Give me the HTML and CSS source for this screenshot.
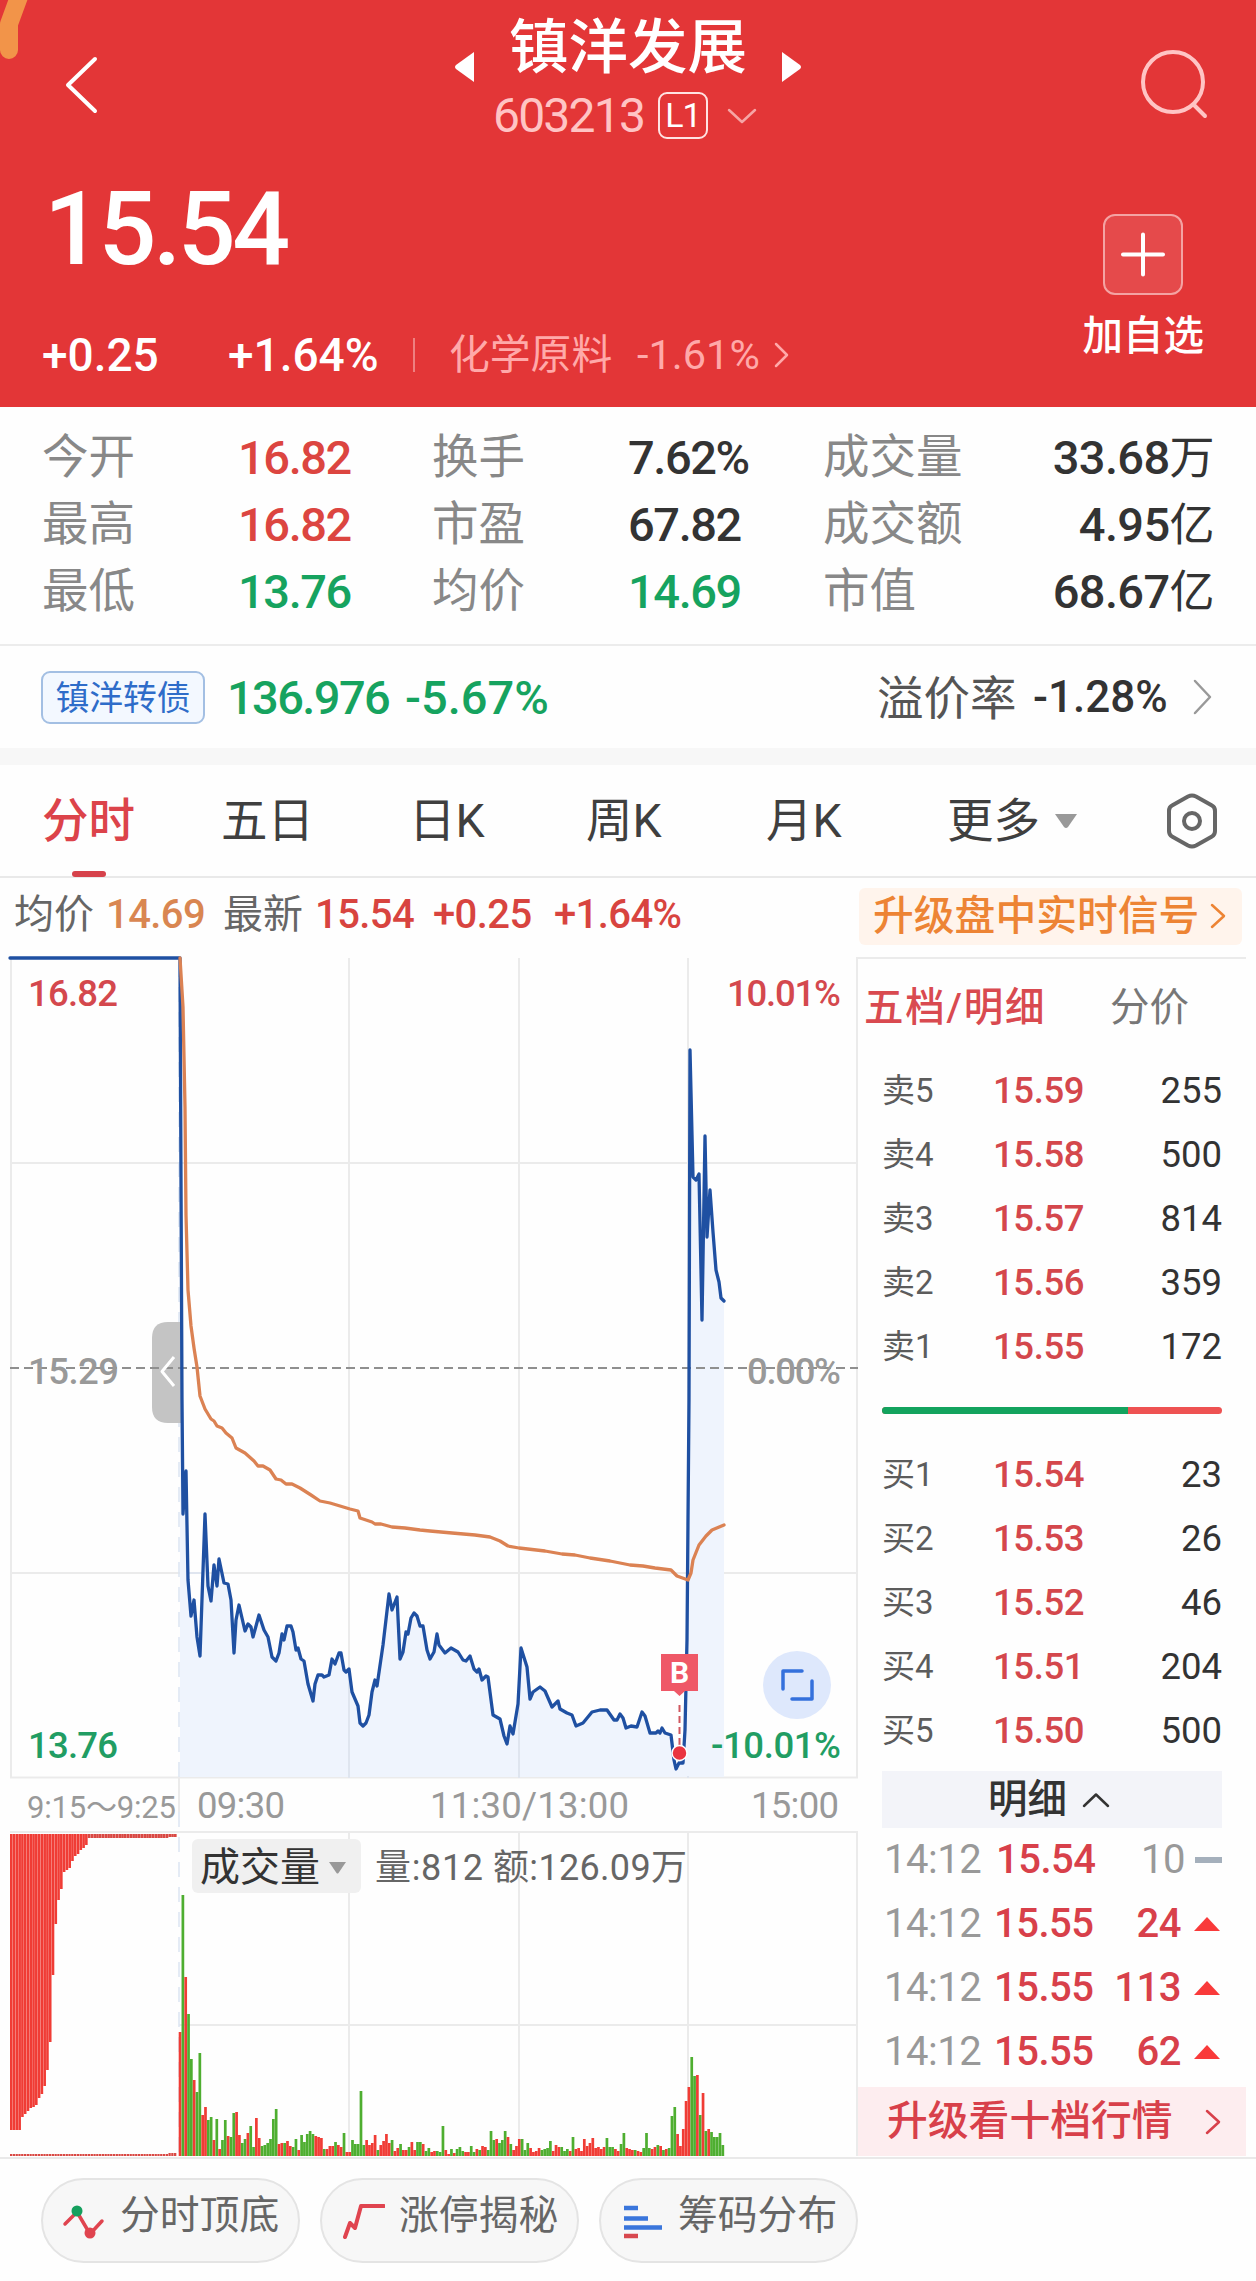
FILE: index.html
```
<!DOCTYPE html>
<html lang="zh-CN">
<head>
    <meta charset="UTF-8">
    <title>镇洋发展 603213</title>
    <link rel="stylesheet" href="styles.css">
</head>
<body>
    <div class="header">
        <svg class="corner" width="40" height="64"><path d="M20 -6L9 24V50"/></svg>
        <div class="topbar">
            <svg class="back" width="36" height="60"><path d="M31 4L4 30L31 56"/></svg>
            <div class="title-block">
                <div class="title-row">
                    <svg class="tri" width="20" height="30"><path d="M20 0V30L2 17Q0 15 2 13Z"/></svg>
                    <h1>镇洋发展</h1>
                    <svg class="tri" width="20" height="30"><path d="M0 0V30L18 17Q20 15 18 13Z"/></svg>
                </div>
                <div class="code-row">
                    <span class="code">603213</span>
                    <span class="level">L1</span>
                    <svg class="down" width="30" height="16"><path d="M2 2L15 14L28 2"/></svg>
                </div>
            </div>
            <svg class="search" width="72" height="72"><circle cx="35" cy="34" r="30"/><path d="M56 57L67 68"/></svg>
        </div>
        <div class="quote">
            <div>
                <div class="price">15.54</div>
                <div class="change">
                    <span class="diff">+0.25</span>
                    <span class="rate">+1.64%</span>
                    <i class="bar"></i>
                    <span class="sector">化学原料</span>
                    <span class="sector-rate">-1.61%</span>
                    <svg width="16" height="26"><path d="M2 2L13 13L2 24"/></svg>
                </div>
            </div>
            <div class="watch">
                <svg width="80" height="81"><rect x="1" y="1" width="78" height="79" rx="11"/><path d="M20 40.500H60M40 20.500V60.500"/></svg>
                <span>加自选</span>
            </div>
        </div>
    </div>

    <div class="stats">
        <span>今开</span><b class="red">16.82</b><span>换手</span><b>7.62%</b><span>成交量</span><b class="last">33.68<em>万</em></b>
        <span>最高</span><b class="red">16.82</b><span>市盈</span><b>67.82</b><span>成交额</span><b class="last">4.95<em>亿</em></b>
        <span>最低</span><b class="green">13.76</b><span>均价</span><b class="green">14.69</b><span>市值</span><b class="last">68.67<em>亿</em></b>
    </div>

    <div class="bond">
        <span class="tag">镇洋转债</span>
        <span class="bond-price">136.976</span>
        <span class="bond-rate">-5.67%</span>
        <span class="premium">溢价率</span>
        <span class="premium-rate">-1.28%</span>
        <svg width="22" height="36"><path d="M3 2L18 18L3 34"/></svg>
    </div>

    <div class="tabs">
        <span class="active">分时</span>
        <span>五日</span>
        <span>日K</span>
        <span>周K</span>
        <span>月K</span>
        <span>更多</span>
        <svg class="more" width="24" height="16"><path d="M1 1H23L14 14Q12 16 10 14Z"/></svg>
        <svg class="hex" width="52" height="56"><path d="M22 3.500Q26 1.500 30 3.500L46 12.500Q49 14 49 18V38Q49 42 46 43.500L30 52.500Q26 54.500 22 52.500L6 43.500Q3 42 3 38V18Q3 14 6 12.500Z"/><circle cx="26" cy="28" r="8"/></svg>
    </div>

    <div class="info">
        <span class="i-label">均价</span>
        <span class="i-avg">14.69</span>
        <span class="i-label2">最新</span>
        <span class="i-red">15.54</span>
        <span class="i-red i-diff">+0.25</span>
        <span class="i-red">+1.64%</span>
        <div class="signal">升级盘中实时信号<svg width="16" height="28"><path d="M2 3L14 14L2 25"/></svg></div>
    </div>

    <div class="main">
        <svg class="chart" width="858" height="1202" viewBox="0 957 858 1202">
            <!-- grid -->
            <path class="grid" d="M11 957V1778M349 958V1778M519 958V1778M688 958V1778M857 957V1778M10 1163H857M10 1573H857M10 1777.500H858M179 1778V1812"/>
            <path class="grid" d="M10 1832H858M179 2025H857M349 1832V2156M519 1832V2156M688 1832V2156M857 1832V2156"/>
            <path class="area" id="area"/>
            <path class="grid over" d="M349 1672V1778M519 1650V1778M688 1776V1778M189 1573H204M206 1573H209"/>
            <path class="split" d="M179 962V1778M179 1812V2156"/>
            <path class="handle" d="M181 1322H168Q152 1322 152 1338V1407Q152 1423 168 1423H181Z"/>
            <path class="zero" d="M10 1368H858"/>
            <path class="handle-arrow" d="M174 1357L162 1371.500L174 1386"/>
            <path class="line price-line" id="priceLine"/>
            <path class="line avg-line" id="avgLine"/>

            <g class="t36">
                <text class="c-red" x="28" y="1006" textLength="90">16.82</text>
                <text class="c-gray" x="28" y="1384" textLength="91">15.29</text>
                <text class="c-green" x="28" y="1758" textLength="90">13.76</text>
                <text class="c-red" x="727" y="1006" textLength="114">10.01%</text>
                <text class="c-gray" x="747" y="1384" textLength="94">0.00%</text>
                <text class="c-green" x="711" y="1758" textLength="130">-10.01%</text>
            </g>
            <g class="t36 c-gray">
                <text class="small" x="27" y="1818" textLength="149">9:15～9:25</text>
                <text x="197" y="1818" textLength="88">09:30</text>
                <text x="430" y="1818" textLength="199">11:30/13:00</text>
                <text x="751" y="1818" textLength="88">15:00</text>
            </g>

            <!-- buy marker -->
            <path class="mark-line" d="M679.500 1705V1746"/>
            <path class="mark" d="M661 1654H698V1691H685L679.500 1696L674 1691H661Z"/>
            <text class="mark-text" x="679.500" y="1683">B</text>
            <circle class="dot" cx="679.500" cy="1753" r="7.500"/>
            <!-- full screen button -->
            <circle class="full" cx="797" cy="1685" r="34"/>
            <path class="full-icon" d="M783 1689V1671H802M812 1681V1699H792"/>

            <!-- volume -->
            <g id="auction"></g>
            <g id="volume"></g>
            <rect class="vol-btn" x="192" y="1839" width="169" height="54" rx="6"/>
            <text class="vol-name" x="200" y="1881">成交量</text>
            <path class="vol-tri" d="M329 1862H346L338.500 1873Q337.500 1874 336.500 1873Z"/>
            <text class="vol-text" x="375" y="1880" textLength="108">量:812</text>
            <text class="vol-text" x="493" y="1880" textLength="194">额:126.09万</text>
        </svg>

        <div class="side">
            <div class="side-tabs"><span class="on">五档/明细</span><span>分价</span></div>
            <div class="book">
                <div><span>卖5</span><b>15.59</b><i>255</i></div>
                <div><span>卖4</span><b>15.58</b><i>500</i></div>
                <div><span>卖3</span><b>15.57</b><i>814</i></div>
                <div><span>卖2</span><b>15.56</b><i>359</i></div>
                <div><span>卖1</span><b>15.55</b><i>172</i></div>
            </div>
            <div class="ratio"><i></i></div>
            <div class="book">
                <div><span>买1</span><b>15.54</b><i>23</i></div>
                <div><span>买2</span><b>15.53</b><i>26</i></div>
                <div><span>买3</span><b>15.52</b><i>46</i></div>
                <div><span>买4</span><b>15.51</b><i>204</i></div>
                <div><span>买5</span><b>15.50</b><i>500</i></div>
            </div>
            <div class="detail">明细<svg width="28" height="16"><path d="M2 14L14 2.500L26 14"/></svg></div>
            <div class="trades">
                <div><span>14:12</span><b class="flat-price">15.54</b><i class="flat">10</i><svg width="28" height="14"><path class="dash" d="M1 4H28V10H1Z"/></svg></div>
                <div><span>14:12</span><b>15.55</b><i>24</i><svg width="28" height="14"><path d="M0 14L13 0L26 14Z"/></svg></div>
                <div><span>14:12</span><b>15.55</b><i>113</i><svg width="28" height="14"><path d="M0 14L13 0L26 14Z"/></svg></div>
                <div><span>14:12</span><b>15.55</b><i>62</i><svg width="28" height="14"><path d="M0 14L13 0L26 14Z"/></svg></div>
            </div>
            <div class="upgrade">升级看十档行情<svg width="18" height="28"><path d="M2 3L14 14L2 25"/></svg></div>
        </div>
    </div>

    <div class="pills">
        <div>
            <svg width="44" height="40"><path class="r" d="M3 24L15 12L28 34L40 21"/><circle class="gd" cx="15" cy="11" r="5.500"/><circle class="rd" cx="28" cy="33" r="5.500"/></svg>
            <span>分时顶底</span>
        </div>
        <div>
            <svg width="44" height="40"><path class="r thick" d="M4 37L9 23L14 28L20 6H43"/></svg>
            <span>涨停揭秘</span>
        </div>
        <div>
            <svg width="44" height="40"><path class="bl" d="M4 8H18M4 18.500H28M4 27.500H42"/><path class="rl" d="M4 36H18"/></svg>
            <span>筹码分布</span>
        </div>
    </div>
    <script src="script.js"></script>
</body>
</html>
```

FILE: styles.css
```
body {
    margin: 0;
    width: 1256px;
    height: 2281px;
    overflow: hidden;
    background-color: #fefefe;
    color: #333;
    font-family: Roboto, "Noto Sans CJK SC", sans-serif;
}
svg {
    display: block;
    flex: none;
    fill: none;
    stroke-linecap: round;
    stroke-linejoin: round;
}
b, i, em {
    font-style: normal;
    font-weight: 400;
}
.red { color: #dc4540; }
.green { color: #16a35f; }

/* header */
.header {
    position: relative;
    height: 407px;
    background-color: #e33637;
    color: #fff;
}
.corner {
    position: absolute;
    left: 0;
    top: 0;
    stroke: #f29449;
    stroke-width: 18;
}
.topbar {
    display: flex;
    justify-content: space-between;
    height: 150px;
    padding: 0 46px 0 64px;
}
.back {
    margin-top: 55px;
    stroke: #fff;
    stroke-width: 4;
}
.title-block {
    width: 400px;
    margin-left: 18px;
}
.title-row {
    display: flex;
    justify-content: center;
    height: 92px;
}
.title-row h1 {
    margin: 0 35px 0 35px;
    font-size: 59.5px;
    line-height: 96px;
    font-weight: 500;
}
.tri {
    margin-top: 52px;
    fill: #fff;
}
.code-row {
    display: flex;
    align-items: center;
    height: 47px;
    padding-left: 65px;
}
.code {
    width: 165px;
    font-size: 48px;
    letter-spacing: -1.8px;
    color: #ffc4c4;
}
.level {
    box-sizing: border-box;
    width: 50px;
    height: 47px;
    border: 2.5px solid #ffe3e3;
    border-radius: 9px;
    font-size: 34px;
    line-height: 43px;
    text-align: center;
    letter-spacing: -1px;
}
.down {
    margin-left: 19px;
    stroke: #f6a5a5;
    stroke-width: 2.5;
}
.search {
    margin-top: 48px;
    stroke: #ffc4c4;
    stroke-width: 4;
}
.quote {
    display: flex;
    justify-content: space-between;
    padding: 0 52px 0 42px;
}
.price {
    height: 156px;
    padding-left: 2px;
    font-size: 102px;
    line-height: 159px;
    font-weight: 500;
    letter-spacing: -3.5px;
}
.change {
    display: flex;
    align-items: center;
    height: 98px;
    font-size: 46px;
    line-height: 98px;
    white-space: nowrap;
}
.diff, .rate { font-weight: 500; }
.diff { width: 186px; }
.rate { width: 185px; }
.change .bar {
    width: 2px;
    height: 34px;
    background-color: #ee8080;
}
.change .sector {
    width: 188px;
    margin-left: 34px;
    font-size: 40.8px;
    color: #ffa9a9;
}
.change .sector-rate {
    width: 137px;
    font-size: 41.5px;
    color: #ffa9a9;
}
.change svg {
    stroke: #ffa9a9;
    stroke-width: 2.5;
}
.watch {
    display: flex;
    flex-direction: column;
    align-items: center;
    padding-top: 64px;
    font-size: 40.5px;
    line-height: 52px;
    font-weight: 500;
}
.watch svg {
    margin-bottom: 15px;
    stroke: #fff;
    stroke-width: 4;
}
.watch rect {
    fill: rgba(255, 255, 255, .1);
    stroke: #f4a3a3;
    stroke-width: 2;
}

/* stats */
.stats {
    display: grid;
    grid-template-columns: 196px 194px 196px 195px 179px 212px;
    grid-auto-rows: 67px;
    height: 220px;
    padding: 17px 42px 0;
    border-bottom: 2px solid #ececec;
    line-height: 67px;
    font-size: 46.5px;
    white-space: nowrap;
}
.stats span { color: #888; }
.stats b {
    font-size: 47px;
    font-weight: 500;
    letter-spacing: -1.4px;
}
.stats .last {
    text-align: right;
    letter-spacing: -.6px;
}
.stats em { font-size: 45px; }

.bond {
    display: flex;
    align-items: center;
    height: 102px;
    padding: 0 42px 0 41px;
    font-size: 47px;
    border-bottom: 17px solid #f7f7f7;
}
.tag {
    box-sizing: border-box;
    width: 164px;
    height: 53px;
    border: 2px solid #a3bfe3;
    border-radius: 9px;
    background-color: #f3f8ff;
    color: #2e6cc9;
    font-size: 33.8px;
    line-height: 52px;
    text-align: center;
}
.bond-price {
    width: 178px;
    margin-left: 22px;
    color: #16a35f;
    font-weight: 500;
    letter-spacing: -1.6px;
}
.bond-rate {
    color: #16a35f;
    font-weight: 500;
}
.premium {
    margin: -5px 0 0 auto;
    width: 156px;
    color: #555;
    font-size: 46.5px;
}
.premium-rate {
    width: 159px;
    font-size: 44px;
    font-weight: 500;
}
.bond svg {
    stroke: #999;
    stroke-width: 2.5;
}

/* period tabs */
.tabs {
    display: flex;
    align-items: center;
    height: 111px;
    padding-left: 42px;
    border-bottom: 2px solid #e9e9e9;
    color: #3f3f3f;
    font-size: 46.5px;
    line-height: 112px;
}
.tabs span {
    position: relative;
    width: 179px;
    white-space: nowrap;
}
.tabs span:nth-child(2) { width: 188px; }
.tabs span:nth-child(3) { width: 177px; }
.tabs span:nth-child(4) { width: 180px; }
.tabs span:nth-child(5) { width: 181px; }
.tabs span:nth-child(6) { width: 107px; }
.tabs .active {
    color: #dc434a;
    font-weight: 500;
}
.tabs .active::after {
    content: "";
    position: absolute;
    left: 30px;
    bottom: 0;
    width: 34px;
    height: 6px;
    border-radius: 3px;
    background-color: #d6424b;
}
.more { fill: #999; }
.hex {
    margin-left: 88px;
    stroke: #666;
    stroke-width: 4;
}
.info {
    display: flex;
    align-items: center;
    height: 79px;
    padding-left: 14px;
    font-size: 40px;
    line-height: 73px;
    white-space: nowrap;
}
.info span {
    height: 79px;
    letter-spacing: -.6px;
}
.info .i-label { width: 92px; color: #666; font-size: 40px; letter-spacing: 0; }
.i-avg { width: 117px; color: #d98651; font-weight: 500; }
.info .i-label2 { width: 92px; color: #666; font-size: 40px; letter-spacing: 0; }
.i-red { width: 118px; color: #d8443f; font-weight: 500; }
.i-diff { width: 121px; }
.info .signal {
    box-sizing: border-box;
    display: flex;
    align-items: center;
    width: 383px;
    height: 57px;
    margin: -3px 14px 0 auto;
    padding-left: 14px;
    border-radius: 6px;
    background-color: #fff4ec;
    color: #ed8434;
    font-size: 40.8px;
    line-height: 57px;
    font-weight: 500;
}
.signal svg {
    margin-left: 11px;
    stroke: #ed8434;
    stroke-width: 2.5;
}

/* chart */
.main {
    display: flex;
    height: 1200px;
    border-bottom: 2px solid #e9e9e9;
}
.chart {
    overflow: visible;
    stroke-linecap: butt;
}
.grid { stroke: #ebebeb; stroke-width: 2; }
.over { stroke: #dfe5ef; }
.area { fill: #eff4fd; }
.split { stroke: #dbe5f2; stroke-width: 1.5; stroke-dasharray: 15 10; }
.zero { stroke: #8f8f8f; stroke-width: 2; stroke-dasharray: 9 5; }
.handle { fill: #c4c4c4; }
.handle-arrow { stroke: #fff; stroke-width: 3; }
.line { stroke-width: 3.3; stroke-linecap: round; }
.price-line { stroke: #1f50a2; }
.avg-line { stroke: #db8253; }
.t36 { font-size: 36.5px; font-weight: 500; }
.t36.c-gray { font-weight: 400; }
.t36 .small { font-size: 31px; }
.c-red { fill: #d4484d; }
.c-gray { fill: #999; }
.c-green { fill: #219d63; }
.mark-line { stroke: #d0575f; stroke-width: 2; stroke-dasharray: 7 4; }
.mark { fill: #ef5867; }
.mark-text {
    fill: #fff;
    font-size: 30px;
    font-weight: 700;
    text-anchor: middle;
}
.dot { fill: #ea3440; stroke: #fff; stroke-width: 1.5; }
.full { fill: #dee8fc; }
.full-icon { stroke: #3470dc; stroke-width: 3.5; stroke-linecap: round; }
.up { fill: #f03c35; }
.fall { fill: #4eae30; }
.line-dots { fill: #d94843; }
.vol-btn { fill: #f0f0f0; }
.vol-name { fill: #333; font-size: 40px; }
.vol-tri { fill: #999; }
.vol-text { fill: #666; font-size: 36px; }

/* order book */
.side {
    width: 388px;
    border-top: 2px solid #ebebeb;
}
.side-tabs {
    display: flex;
    height: 99px;
    padding-left: 6px;
    color: #777;
    font-size: 39.5px;
    line-height: 98px;
}
.side-tabs .on {
    width: 246px;
    color: #d94a50;
    font-weight: 500;
    letter-spacing: 1.8px;
}
.book div {
    display: flex;
    height: 64px;
    padding: 0 24px 0 24px;
    line-height: 65px;
    font-size: 36.5px;
}
.book span {
    width: 111px;
    color: #5c5c5c;
    font-size: 33px;
}
.book b {
    color: #d4474c;
    font-weight: 500;
    letter-spacing: -.4px;
}
.book i { margin-left: auto; }
.ratio {
    width: 340px;
    height: 7px;
    margin: 29px 0 28px 24px;
    border-radius: 4px;
    background-color: #ee5252;
}
.ratio i {
    display: block;
    width: 246px;
    height: 7px;
    border-radius: 4px 0 0 4px;
    background-color: #13a35e;
}
.detail {
    box-sizing: border-box;
    display: flex;
    align-items: center;
    width: 340px;
    height: 57px;
    margin: 9px 0 0 24px;
    padding-left: 106px;
    background-color: #f3f4f9;
    font-size: 39.5px;
    line-height: 57px;
    font-weight: 500;
}
.detail svg {
    margin-left: 15px;
    stroke: #333;
    stroke-width: 2.5;
}
.trades {
    height: 259px;
}
.trades div {
    display: flex;
    align-items: center;
    height: 64px;
    padding: 0 24px 0 26px;
    font-size: 40px;
    line-height: 68px;
}
.trades span {
    width: 110px;
    color: #999;
    letter-spacing: -.5px;
}
.trades b, .trades i {
    color: #d8404a;
    font-weight: 500;
    letter-spacing: -.5px;
}
.trades .flat-price { margin-left: 2px; }
.trades i { margin-left: auto; }
.trades .flat {
    color: #999;
    font-weight: 400;
}
.trades svg {
    margin-left: 13px;
    fill: #f93a3a;
}
.trades .flat + svg { margin-left: 9px; }
.trades .dash { fill: #a5b0bc; }
.upgrade {
    display: flex;
    align-items: center;
    height: 69px;
    padding-left: 29px;
    background-color: #fdedef;
    color: #d8404a;
    font-size: 40.8px;
    line-height: 71px;
    font-weight: 500;
}
.upgrade svg {
    margin-left: 32px;
    stroke: #d8404a;
    stroke-width: 2.5;
}

/* bottom pills */
.pills {
    display: flex;
    gap: 20px;
    padding: 19px 0 0 41px;
}
.pills div {
    box-sizing: border-box;
    display: flex;
    align-items: center;
    width: 259px;
    height: 85px;
    padding-left: 19px;
    border: 2px solid #e4e4e4;
    border-radius: 43px;
    background-color: #f7f7f7;
    color: #666;
    font-size: 39.8px;
}
.pills span {
    margin: -19px 0 0 14px;
    white-space: nowrap;
}
.pills svg { margin-top: -2px; }
.pills .r { stroke: #e0444f; stroke-width: 3.5; }
.pills .thick { stroke-width: 4; }
.gd { fill: #15a05e; }
.rd { fill: #e0444f; }
.bl { stroke: #3a76dc; stroke-width: 4.5; stroke-linecap: butt; }
.rl { stroke: #d8484f; stroke-width: 4.5; stroke-linecap: butt; }
```

FILE: script.js
```
// x,y points of the price line after the opening auction
var price = "180,958 182,1400 183,1514 186,1471 188,1580 191,1616 194,1600 197,1637 200,1656 205,1514 208,1586 211,1601 214,1565 217,1586 219,1559 224,1583 228,1584 231,1600 234,1653 236,1620 239,1605 245,1631 248,1624 251,1627 253,1637 259,1615 264,1630 268,1637 272,1657 276,1661 279,1653 282,1634 284,1640 287,1626 291,1626 293,1632 296,1650 298,1648 301,1659 304,1661 308,1684 313,1701 315,1684 318,1675 322,1675 324,1677 329,1675 332,1659 335,1664 339,1653 341,1653 344,1670 346,1672 349,1669 352,1692 358,1706 360,1723 363,1726 366,1723 369,1715 372,1692 375,1680 377,1686 383,1645 389,1594 392,1610 397,1597 400,1659 403,1652 406,1632 408,1634 411,1618 414,1613 417,1616 420,1626 423,1626 427,1650 430,1659 434,1652 437,1634 439,1645 445,1653 451,1648 458,1652 463,1660 466,1661 470,1656 474,1669 477,1672 479,1669 482,1680 486,1676 488,1677 493,1715 500,1719 504,1736 507,1744 510,1726 513,1734 518,1704 521,1648 527,1667 530,1699 533,1692 540,1687 545,1691 552,1707 558,1701 560,1709 567,1713 572,1715 576,1726 583,1723 592,1712 600,1710 607,1710 614,1720 617,1720 620,1714 623,1718 626,1728 631,1726 637,1727 642,1712 645,1716 650,1733 656,1733 658,1731 660,1733 662,1728 665,1733 671,1735 674,1760 676,1769 679,1763 683,1763 685,1730 687,1640 689,1400 690,1050 693,1177 696,1180 699,1174 702,1320 705,1136 707,1237 710,1190 713,1232 716,1270 719,1282 721,1298 724,1301";
var avg = "180,958 183,1007 185,1107 186,1215 188,1290 191,1326 194,1348 197,1367 200,1396 205,1409 211,1419 214,1421 217,1426 222,1428 226,1433 232,1438 236,1448 245,1453 254,1461 258,1466 263,1466 270,1470 276,1479 281,1480 286,1484 292,1484 300,1488 311,1495 320,1501 330,1503 340,1506 350,1509 358,1511 360,1518 372,1522 375,1524 381,1524 392,1527 405,1528 420,1530 430,1531 452,1533 475,1535 490,1537 500,1541 508,1546 519,1548 545,1551 562,1554 575,1555 590,1558 610,1561 630,1565 643,1566 655,1568 671,1570 677,1576 688,1580 691,1573 693,1560 699,1545 706,1536 712,1530 724,1525";

document.getElementById('priceLine').setAttribute('d', 'M10,958 L' + price);
document.getElementById('avgLine').setAttribute('d', 'M' + avg);
document.getElementById('area').setAttribute('d', 'M180,1777 L' + price + ' 724,1777 Z');

var rect = (x, y, w, h, cls) => '<rect class="' + cls + '" x="' + x.toFixed(2) + '" y="' + y + '" width="' + w + '" height="' + h + '"/>';

// opening auction, bars hang from the top
var hang = [296, 296, 296, 296, 283, 280, 277, 274, 273, 271, 264, 260, 252, 236, 208, 141, 90, 66, 55, 38, 36, 34, 27, 22, 20, 16, 14, 11];
var out = '';
for (var i = 0; i < 60; i++) {
    var h = i < hang.length ? hang[i] : (i > 56 ? 3 : 4);
    out += rect(10 + i * 2.78, 1834, 2.6, h, h > 4 ? 'up' : 'line-dots');
    out += rect(10 + i * 2.78, i > 56 ? 2153 : 2154, 2.3, i > 56 ? 3 : 2, 'line-dots');
}
document.getElementById('auction').innerHTML = out;

// one bar a minute, r = up, g = down
var vol = "r124 g261 r179 g142 g97 r76 g64 g103 r41 r49 g36 g39 r16 g37 r7 g16 g36 r20 g19 g43 r44 r21 g13 g17 r23 g30 g9 r38 r18 g10 g11 g13 g17 g37 g47 r12 r13 g13 r15 r10 g9 g17 r6 g21 g14 g22 g25 g22 r20 r19 r18 g7 r7 r10 r10 g14 r11 r9 g23 r4 r4 g16 g12 g12 g65 g11 r16 r11 r13 r21 g6 r11 r15 r22 r13 g16 r5 r8 g12 r6 r6 g9 r14 r6 g14 g14 r12 g5 g8 r4 r5 g5 g4 g30 r6 r2 g7 r3 g7 g9 g5 r4 r4 g10 g4 r7 g6 r10 r9 g6 g25 g16 r17 g13 g16 g25 r19 g12 r6 r10 r17 g17 g6 g13 r8 r4 r5 r8 g6 g7 g8 g15 r5 r11 r9 g9 g5 g7 r5 g19 r7 r8 r5 r17 r10 r13 r18 r8 r9 r7 r9 g18 g9 g9 r7 r5 g12 g23 r8 r7 r6 g6 r5 r4 g8 g23 g8 r7 r9 g11 r10 g6 r7 g8 g40 g49 r22 r10 r27 r55 r69 g99 g80 r81 g41 r63 g25 r27 g24 g19 g19 g23 g11".split(' ');
document.getElementById('volume').innerHTML = vol.map((v, i) => {
    var h = +v.slice(1);
    return rect(178.7 + i * 2.827, 2156 - h, 2.7, h, v[0] == 'r' ? 'up' : 'fall');
}).join('');
```
